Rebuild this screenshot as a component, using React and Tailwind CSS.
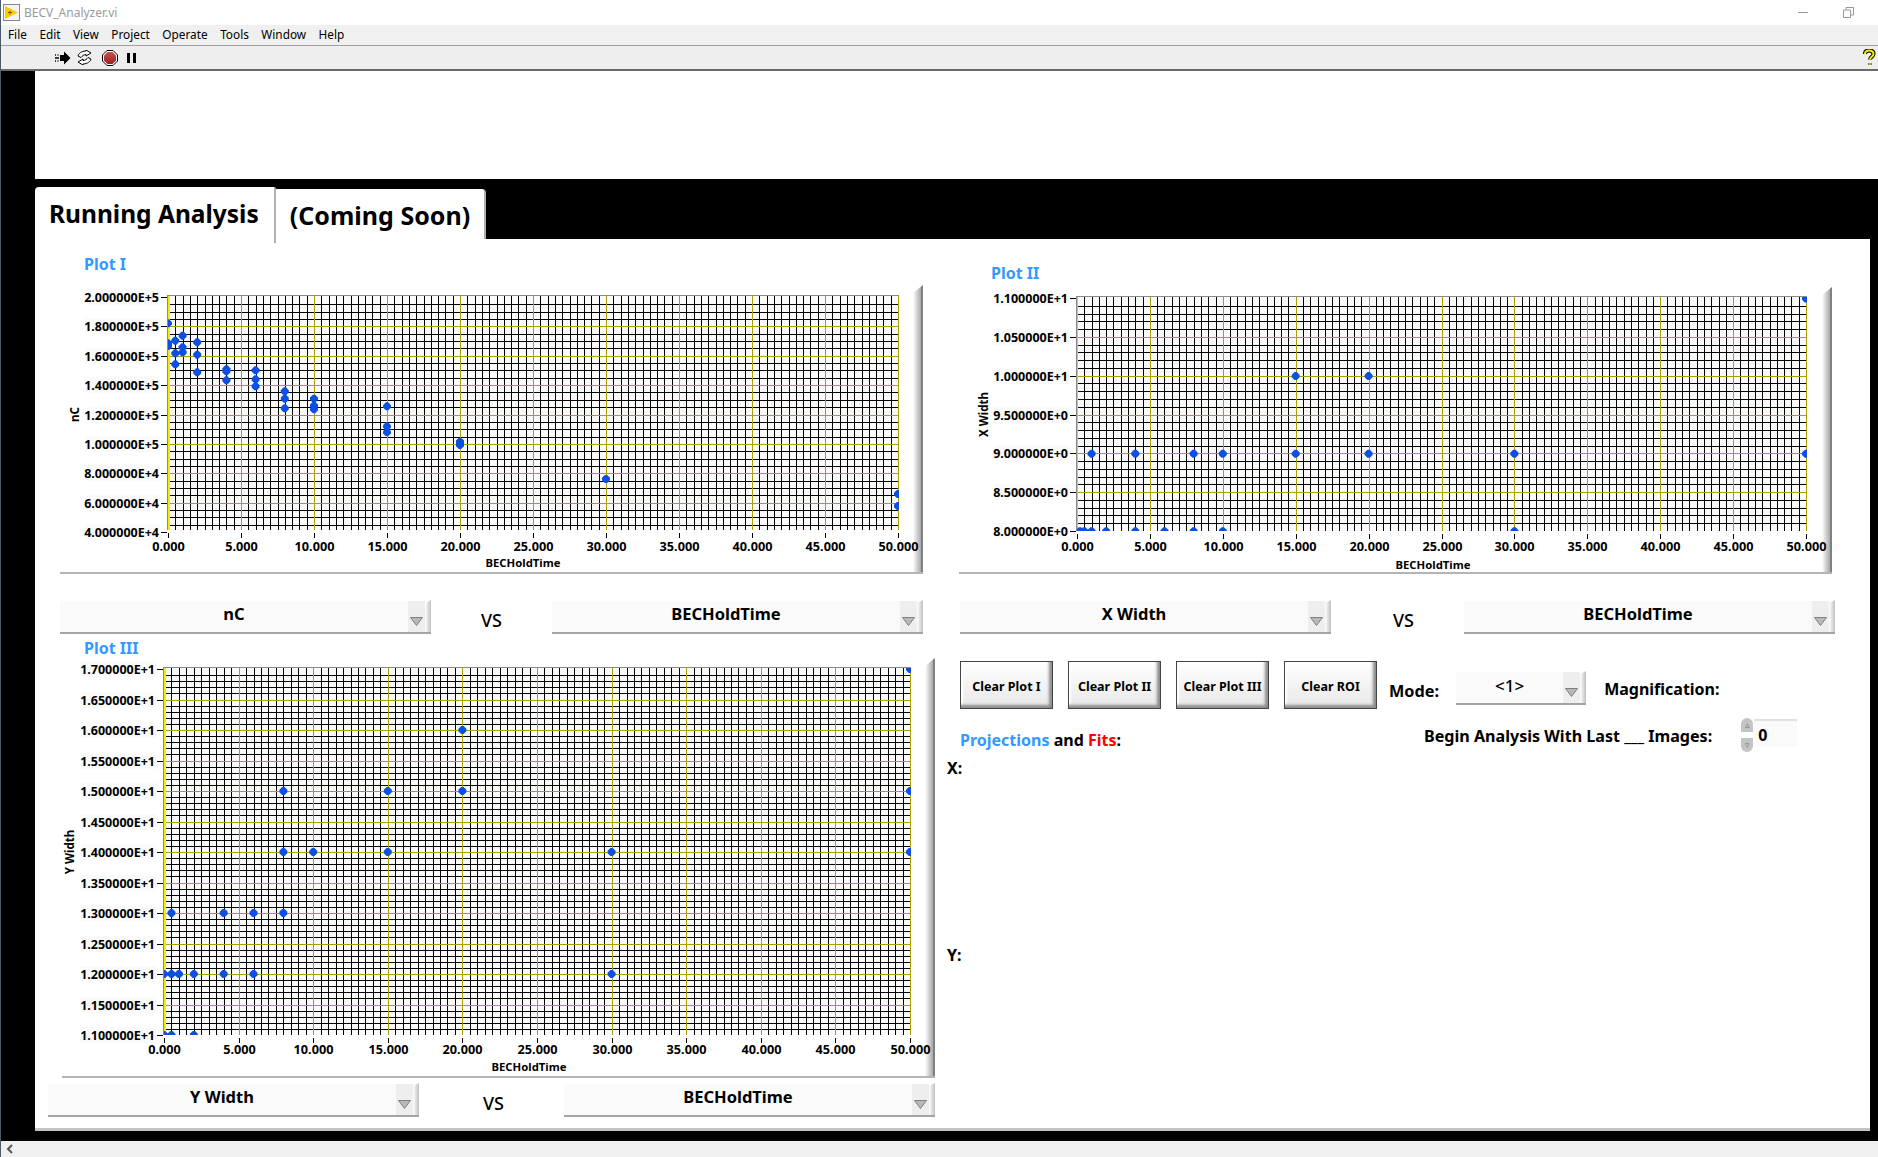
const FONT = '"Noto Sans", "Open Sans", sans-serif';
const BLUE = '#3399ff';

function range(n, f) { return Array.from({ length: n }, (_, i) => f(i)); }

function Marker({ x, y }) {
  const p = [[-1.2,-4],[1.2,-4],[4,-1.2],[4,1.2],[1.2,4],[-1.2,4],[-4,1.2],[-4,-1.2]]
    .map(([a, b]) => `${a + x},${b + y}`).join(' ');
  return <polygon points={p} fill="#0b50e0" />;
}

function Plot({ id, w, h, left, right, top, bottom, clipBottom, labels, minorY, yName, yNameX, nameY, nameX, points, labelDy, axisW, axisColor }) {
  const majorsY = labels.length - 1;
  const stepY = (bottom - top) / majorsY;
  const stepX = (right - left) / 10;
  const toX = (v) => left + (v / 50) * (right - left);
  const hMinor = range(majorsY * minorY + 1, (i) => Math.round(top + (i * stepY) / minorY) + 0.5);
  const vMinor = range(101, (i) => Math.round(left + (i * stepX) / 10) + 0.5);
  return (
    <svg width={w} height={h} className="block flex-none overflow-visible relative z-10" style={{ fontFamily: FONT }}>
      <defs>
        <clipPath id={id}><rect x={left} y={top - 1} width={right - left + 1} height={clipBottom - top + 1} /></clipPath>
      </defs>
      <rect x={left} y={top - 1} width={right - left + 1} height={clipBottom - top + 1} fill="#fafafa" />
      <g clipPath={`url(#${id})`} shapeRendering="crispEdges">
        {vMinor.map((x, i) => i % 10 !== 0 && <line key={i} x1={x} x2={x} y1={top - 2} y2={clipBottom} stroke="#000" />)}
        {hMinor.map((y, i) => i % minorY !== 0 && <line key={i} x1={left} x2={right + 1} y1={y} y2={y} stroke="#000" />)}
        {hMinor.map((y, i) => i % minorY === 0 && i !== 0 && <line key={i} x1={left} x2={right + 1} y1={y} y2={y} stroke="#a8a000" />)}
        {vMinor.map((x, i) => i % 10 === 0 && i !== 0 && <line key={i} x1={x} x2={x} y1={top - 2} y2={clipBottom} stroke="#a8a000" />)}
      </g>
      <g shapeRendering="crispEdges">
        <line x1={left} x2={right + 1} y1={top - 1.5} y2={top - 1.5} stroke="#8a8a8a" />
        <rect x={left - 1} y={top - 2} width={1} height={clipBottom - top + 2} fill="#8a8a8a" />
        <rect x={left} y={top - 1} width={axisW} height={clipBottom - top + 1} fill={axisColor} />
      </g>
      <g clipPath={`url(#${id})`}>
        {points.map(([v, y], i) => <Marker key={i} x={toX(v)} y={y} />)}
      </g>
      {labels.map((t, i) => {
        const y = Math.round(top + i * stepY);
        return (
          <g key={t}>
            <rect x={left - 83} y={y - 8} width={75} height={16} fill="#fafafa" />
            <line x1={left - 7} x2={left - 1} y1={y + 0.5} y2={y + 0.5} stroke="#000" shapeRendering="crispEdges" />
            <text x={left - 9} y={y + 4.5} textAnchor="end" fontSize="12.5" fontWeight="700" fill="#000">{t}</text>
          </g>
        );
      })}
      {range(11, (i) => {
        const x = Math.round(left + i * stepX) + 0.5;
        return (
          <g key={i}>
            <line x1={x} x2={x} y1={clipBottom + 3} y2={clipBottom + 8} stroke="#000" shapeRendering="crispEdges" />
            <text x={x} y={clipBottom + labelDy} textAnchor="middle" fontSize="12.7" fontWeight="700" fill="#000">{(i * 5).toFixed(3)}</text>
          </g>
        );
      })}
      <text x={nameX} y={nameY} textAnchor="middle" fontSize="11.3" fontWeight="700" fill="#000">BECHoldTime</text>
      <text transform={`translate(${yNameX},${(top + bottom) / 2}) rotate(-90)`} textAnchor="middle" fontSize="11.5" fontWeight="700" fill="#000">{yName}</text>
    </svg>
  );
}

function Frame({ className, children }) {
  return (
    <div className={`flex border-b-2 border-[#b4b4b4] ${className}`}>
      {children}
      <div className="w-[10px] flex-none bg-gradient-to-r from-[#ffffff] to-[#a8a8a8] border-r-2 border-[#808080] [clip-path:polygon(0_8px,100%_0,100%_100%,0_100%)]" />
    </div>
  );
}

function Tri() {
  return (
    <svg width="13" height="9" viewBox="0 0 13 9" className="block">
      <polygon points="0.5,0.5 12.5,0.5 6.500,8.500" fill="#b8b8b8" stroke="#808080" strokeWidth="1" />
    </svg>
  );
}

function Drop({ label, w = 'w-[371px]', text = 'text-[16.5px] font-bold' }) {
  return (
    <div className={`flex h-[34px] ${w} border-b-2 border-[#a4a4a4] flex-none`}>
      <div className={`flex-1 bg-[#fafafa] flex items-center justify-center pb-[4px] mt-[1px] text-black ${text}`}>{label}</div>
      <div className="w-[17px] bg-[#eeeeee] mt-[1px] flex items-start justify-center pt-[16px]"><Tri /></div>
      <div className="w-[6px] bg-gradient-to-r from-[#ffffff] to-[#c0c0c0] [clip-path:polygon(0_3px,100%_0,100%_100%,0_100%)]" />
    </div>
  );
}

function Row({ left, right, className, vs = '' }) {
  return (
    <div className={`flex justify-between items-start ${className}`}>
      <Drop label={left} />
      <div className={`text-[18px] text-black mt-[7px] ${vs}`} style={{ fontWeight: 500 }}>VS</div>
      <Drop label={right} />
    </div>
  );
}

function Btn({ children }) {
  return (
    <div className="w-[93px] h-[48px] flex-none border border-[#444] bg-gradient-to-b from-[#ffffff] to-[#e8e8e8] flex items-center justify-center pt-[4px] text-[12.5px] font-bold text-black shadow-[inset_-4px_-4px_3px_-1px_#8c8c8c,inset_3px_3px_2px_-1px_#ffffff]">
      {children}
    </div>
  );
}

function Hp() {
  return (
    <svg width="14" height="18" viewBox="0 0 14 18">
      <path d="M3 5 C3 2 5 1.5 7 1.5 C10 1.5 11.5 3 11.5 5 C11.5 7.5 8 8 8 10.5 M8 14.5 L8 15.5" fill="none" stroke="#000" strokeWidth="4" />
      <path d="M3 5 C3 2 5 1.5 7 1.5 C10 1.5 11.5 3 11.5 5 C11.5 7.5 8 8 8 10.5 M8 14.5 L8 15.5" fill="none" stroke="#f8f000" strokeWidth="2" />
    </svg>
  );
}

const p1 = [
  [0, 250], [0, 310], [0, 318], [0.5, 302], [0.5, 340], [0.5, 373], [1, 287], [1, 322], [1, 337],
  [2, 307], [2, 344], [2, 397], [4, 388], [4, 394], [4, 421], [6, 391], [6, 418], [6, 439],
  [8, 454], [8, 476], [8, 505], [10, 476], [10, 497], [10, 508], [15, 499], [15, 559], [15, 577],
  [20, 605], [20, 610], [20, 615], [30, 717], [50, 762], [50, 798],
].map(([v, z]) => [v, z / 3 - 45]);

const rowP2 = (v) => 298.5 - 287 + ((1.1 - v) / 0.05) * 38.8;
const p2 = [
  [50, 1.1], [15, 1.0], [20, 1.0],
  ...[1, 4, 8, 10, 15, 20, 30, 50].map((x) => [x, 0.9]),
  ...[0.2, 0.5, 1, 2, 4, 6, 8, 10, 30].map((x) => [x, 0.8]),
].map(([x, v]) => [x, rowP2(v)]);

const rowP3 = (v) => 669 - 658 + (17 - v) * 61 ;
const p3 = [
  [50, 17], [20, 16],
  ...[8, 15, 20, 50].map((x) => [x, 15]),
  ...[8, 10, 15, 30, 50].map((x) => [x, 14]),
  ...[0.5, 4, 6, 8].map((x) => [x, 13]),
  ...[0, 0.5, 1, 2, 4, 6, 30].map((x) => [x, 12]),
  ...[0, 0.5, 2].map((x) => [x, 11]),
].map(([x, v]) => [x, rowP3(v)]);

export default function App() {
  return (
    <div className="w-[1878px] h-[1157px] flex flex-col bg-black overflow-hidden border-l border-[#4a5a68]" style={{ fontFamily: FONT }}>
      <div className="h-[25px] flex-none bg-white flex items-center pl-[2px] relative">
        <svg width="17" height="17" viewBox="0 0 17 17" className="flex-none">
          <rect x="0.5" y="0.5" width="16" height="16" fill="#f4f4f4" stroke="#888" />
          <polygon points="2,2 15,8.5 2,15" fill="#ffcc00" />
          <path d="M5 8.5h4M7 6.5v4" stroke="#7a5a00" strokeWidth="1" />
        </svg>
        <span className="ml-[4px] text-[12px] text-[#9a9a9a]">BECV_Analyzer.vi</span>
        <div className="ml-auto flex items-center mr-[24px] gap-[35px]">
          <div className="w-[10px] h-px bg-[#999]" />
          <svg width="11" height="11" viewBox="0 0 11 11"><path d="M0.5 3h7v7.5h-7zM3 3V0.5h7.5V8H8" fill="none" stroke="#999" /></svg>
        </div>
      </div>
      <div className="h-[21px] flex-none bg-[#f0f0f0] border-b border-[#a0a0a0] flex items-center pl-[7px] gap-[12.5px] text-[11.8px] text-black">
        {['File', 'Edit', 'View', 'Project', 'Operate', 'Tools', 'Window', 'Help'].map((m) => <span key={m}>{m}</span>)}
      </div>
      <div className="h-[25px] flex-none bg-[#eeeeee] border-b-2 border-[#6a6a6a] flex items-center pl-[54px] relative">
        <svg width="16" height="14" viewBox="0 0 16 14">
          <path d="M5 4h4V0.5L15.5 7 9 13.5V10H5z" fill="#000" />
          <path d="M0 4h1M0 7h4M0 10h1M2.5 4h1M2.5 10h1" stroke="#000" strokeWidth="1.4" />
        </svg>
        <svg width="17" height="15" viewBox="0 0 17 15" className="ml-[5px]">
          <path d="M2 6C3 2 8 1 10 1V0l5 3-5 3V4.5C8 4.5 6 6 5 7.5z M15 9c-1 4-6 5-8 5v1l-5-3 5-3v1.5c2 0 4-1.500 5-3z" fill="#fff" stroke="#000" strokeWidth="1" />
        </svg>
        <svg width="16" height="16" viewBox="0 0 16 16" className="ml-[9px]">
          <defs><linearGradient id="stopg" x1="0" y1="0" x2="0" y2="1"><stop offset="0" stopColor="#c85050" /><stop offset="1" stopColor="#a02020" /></linearGradient></defs>
          <polygon points="5,0.5 11,0.5 15.500,5 15.500,11 11,15.500 5,15.500 0.500,11 0.500,5" fill="#fff" stroke="#000" />
          <polygon points="5.500,2 10.500,2 14,5.500 14,10.500 10.500,14 5.500,14 2,10.500 2,5.500" fill="url(#stopg)" />
        </svg>
        <div className="ml-[9px] flex gap-[3px]"><div className="w-[3px] h-[10px] bg-black" /><div className="w-[3px] h-[10px] bg-black" /></div>
        <div className="ml-auto mr-[2px]"><Hp /></div>
      </div>

      <div className="flex-1 flex flex-col pl-[34px] min-h-0">
        <div className="h-[108px] flex-none bg-white" />
        <div className="flex items-end h-[60px] flex-none pt-[8px] relative z-10">
          <div className="w-[241px] h-[56px] -mb-[4px] flex-none bg-white rounded-tl-[4px] rounded-tr-[2px] border-r-2 border-[#b0b0b0] pl-[14px] pt-[7px] text-[24.5px] leading-[40px] font-bold text-black whitespace-nowrap">Running Analysis</div>
          <div className="w-[210px] h-[50px] flex-none bg-white rounded-tr-[4px] border-r-2 border-[#b0b0b0] text-center pt-[6px] text-[25px] leading-[40px] font-bold text-black whitespace-nowrap">(Coming Soon)</div>
        </div>

        <div className="h-[892px] flex-none bg-white mr-[8px] border-b-[3px] border-[#c4c4c4] flex items-start pl-[13px]">
          <div className="w-[887px] flex-none flex flex-col">
            <div className="ml-[36px] mt-[15px] h-[20px] leading-[20px] text-[16px] font-bold" style={{ color: BLUE }}>Plot I</div>
            <Frame className="ml-[12px] mt-[11px] w-[863px]">
              <Plot id="c1" w={853} h={287} left={108} right={838} top={12} bottom={247} clipBottom={245} minorY={4} labelDy={21} axisW={2} axisColor="#f4ec00"
                labels={['2.000000E+5', '1.800000E+5', '1.600000E+5', '1.400000E+5', '1.200000E+5', '1.000000E+5', '8.000000E+4', '6.000000E+4', '4.000000E+4']}
                yName="nC" yNameX={19} nameX={463} nameY={282} points={p1} />
            </Frame>
            <Row left="nC" right="BECHoldTime" className="ml-[12px] w-[863px] mt-[26px]" />
            <div className="ml-[36px] mt-[4px] h-[20px] leading-[20px] text-[16px] font-bold" style={{ color: BLUE }}>Plot III</div>
            <Frame className="ml-[14px] w-[873px]">
              <Plot id="c3" w={863} h={418} left={102} right={848} top={11} bottom={377} clipBottom={377} minorY={5} labelDy={19} axisW={2} axisColor="#f4ec00"
                labels={['1.700000E+1', '1.650000E+1', '1.600000E+1', '1.550000E+1', '1.500000E+1', '1.450000E+1', '1.400000E+1', '1.350000E+1', '1.300000E+1', '1.250000E+1', '1.200000E+1', '1.150000E+1', '1.100000E+1']}
                yName="Y Width" yNameX={12} nameX={467} nameY={413} points={p3} />
            </Frame>
            <Row left="Y Width" right="BECHoldTime" className="w-[887px] mt-[5px]" vs="ml-[4px]" />
          </div>

          <div className="ml-[24px] w-[876px] flex-none flex flex-col">
            <div className="ml-[32px] mt-[24px] h-[20px] leading-[20px] text-[16px] font-bold" style={{ color: BLUE }}>Plot II</div>
            <Frame className="mt-[4px] w-[873px]">
              <Plot id="c2" w={863} h={285} left={118} right={847} top={11} bottom={244} clipBottom={244} minorY={5} labelDy={20} axisW={1} axisColor="#d8cc30"
                labels={['1.100000E+1', '1.050000E+1', '1.000000E+1', '9.500000E+0', '9.000000E+0', '8.500000E+0', '8.000000E+0']}
                yName="X Width" yNameX={29} nameX={474} nameY={282} points={p2} />
            </Frame>
            <Row left="X Width" right="BECHoldTime" className="ml-px w-[875px] mt-[26px]" vs="ml-[12px]" />

            <div className="mt-[27px] ml-px flex items-start">
              <div className="flex gap-[15px] flex-none">
                <Btn>Clear Plot I</Btn><Btn>Clear Plot II</Btn><Btn>Clear Plot III</Btn><Btn>Clear ROI</Btn>
              </div>
              <div className="ml-[12px] mt-[19px] text-[16.3px] leading-[22px] font-bold text-black">Mode:</div>
              <div className="ml-[17px] mt-[10px]">
                <Drop label="<1>" w="w-[130px]" text="text-[17px] font-medium" />
              </div>
              <div className="ml-[18px] mt-[17px] text-[16px] leading-[22px] font-bold text-black">Magnification:</div>
            </div>

            <div className="mt-[9px] ml-px flex items-start">
              <div className="mt-[11px] text-[16px] leading-[22px] font-bold text-black whitespace-nowrap">
                <span style={{ color: BLUE }}>Projections</span> and <span className="text-[#ff0000]">Fits</span>:
              </div>
              <div className="ml-[303px] mt-[7px] text-[16.1px] leading-[22px] font-bold text-black whitespace-nowrap">Begin Analysis With Last ___ Images:</div>
              <div className="ml-[29px] flex h-[34px]">
                <div className="w-[12px] flex flex-col justify-between">
                  <div className="h-[14px] bg-[#c4c4c4] rounded-t-[6px] text-[9px] leading-[14px] text-center text-[#777]">▵</div>
                  <div className="h-[14px] bg-[#c4c4c4] rounded-b-[6px] text-[9px] leading-[14px] text-center text-[#777]">▿</div>
                </div>
                <div className="ml-[1px] w-[43px] h-[28px] mt-[1px] bg-[#fafafa] border-t-2 border-[#e0e0e0] pl-[4px] pt-[2px] text-[16px] leading-[24px] font-bold text-black">0</div>
              </div>
            </div>

            <div className="-ml-[12px] mt-[5px] h-[22px] text-[16px] leading-[22px] font-bold text-black">X:</div>
            <div className="-ml-[12px] mt-[165px] h-[22px] text-[16px] leading-[22px] font-bold text-black">Y:</div>
          </div>
        </div>
        <div className="flex-1" />
      </div>
      <div className="h-[16px] flex-none bg-[#f0f0f0] flex items-center pl-[5px]">
        <svg width="8" height="10" viewBox="0 0 8 10"><path d="M6 1L2 5l4 4" fill="none" stroke="#555" strokeWidth="2" /></svg>
      </div>
    </div>
  );
}
